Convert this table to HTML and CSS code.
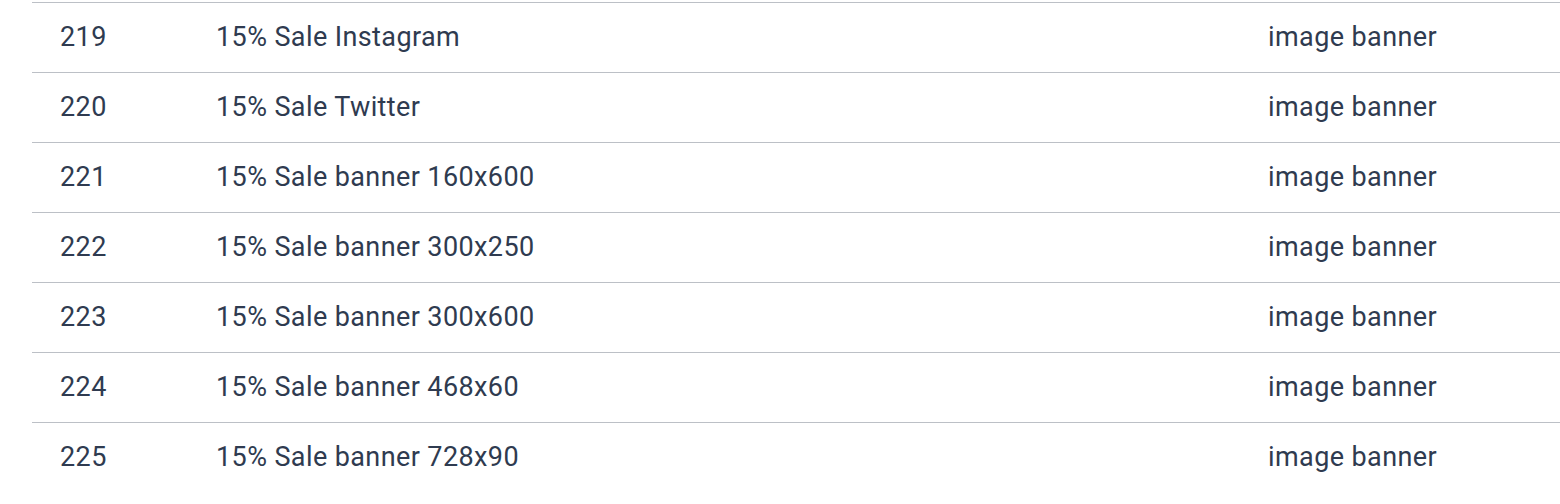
FILE: index.html
```html
<!DOCTYPE html>
<html>
<head>
<meta charset="utf-8">
<link rel="stylesheet" href="styles.css">
</head>
<body>
<div class="wrap">
<table class="list">
<tbody>
<tr><td class="id">219</td><td class="name">15% Sale Instagram</td><td class="type">image banner</td></tr>
<tr><td class="id">220</td><td class="name">15% Sale Twitter</td><td class="type">image banner</td></tr>
<tr><td class="id">221</td><td class="name">15% Sale banner 160x600</td><td class="type">image banner</td></tr>
<tr><td class="id">222</td><td class="name">15% Sale banner 300x250</td><td class="type">image banner</td></tr>
<tr><td class="id">223</td><td class="name">15% Sale banner 300x600</td><td class="type">image banner</td></tr>
<tr><td class="id">224</td><td class="name">15% Sale banner 468x60</td><td class="type">image banner</td></tr>
<tr><td class="id">225</td><td class="name">15% Sale banner 728x90</td><td class="type">image banner</td></tr>
</tbody>
</table>
</div>
</body>
</html>
```
FILE: styles.css
```css
html, body {
  margin: 0;
  padding: 0;
  background: #ffffff;
}
.wrap {
  padding: 2px 0 0 32px;
  overflow: hidden;
}
.list {
  border-collapse: collapse;
  width: 1560px;
  font-family: Roboto, "Liberation Sans", sans-serif;
  font-size: 27px;
  letter-spacing: 0.4px;
  color: #2f3b50;
  table-layout: fixed;
}
.list tr {
  height: 70px;
  border-top: 1px solid #bcc0c6;
}
.list td {
  padding: 0 28px 1px;
  vertical-align: middle;
  white-space: nowrap;
}
.list td.id { width: 100px; }
.list td.name { width: 996px; }
```
